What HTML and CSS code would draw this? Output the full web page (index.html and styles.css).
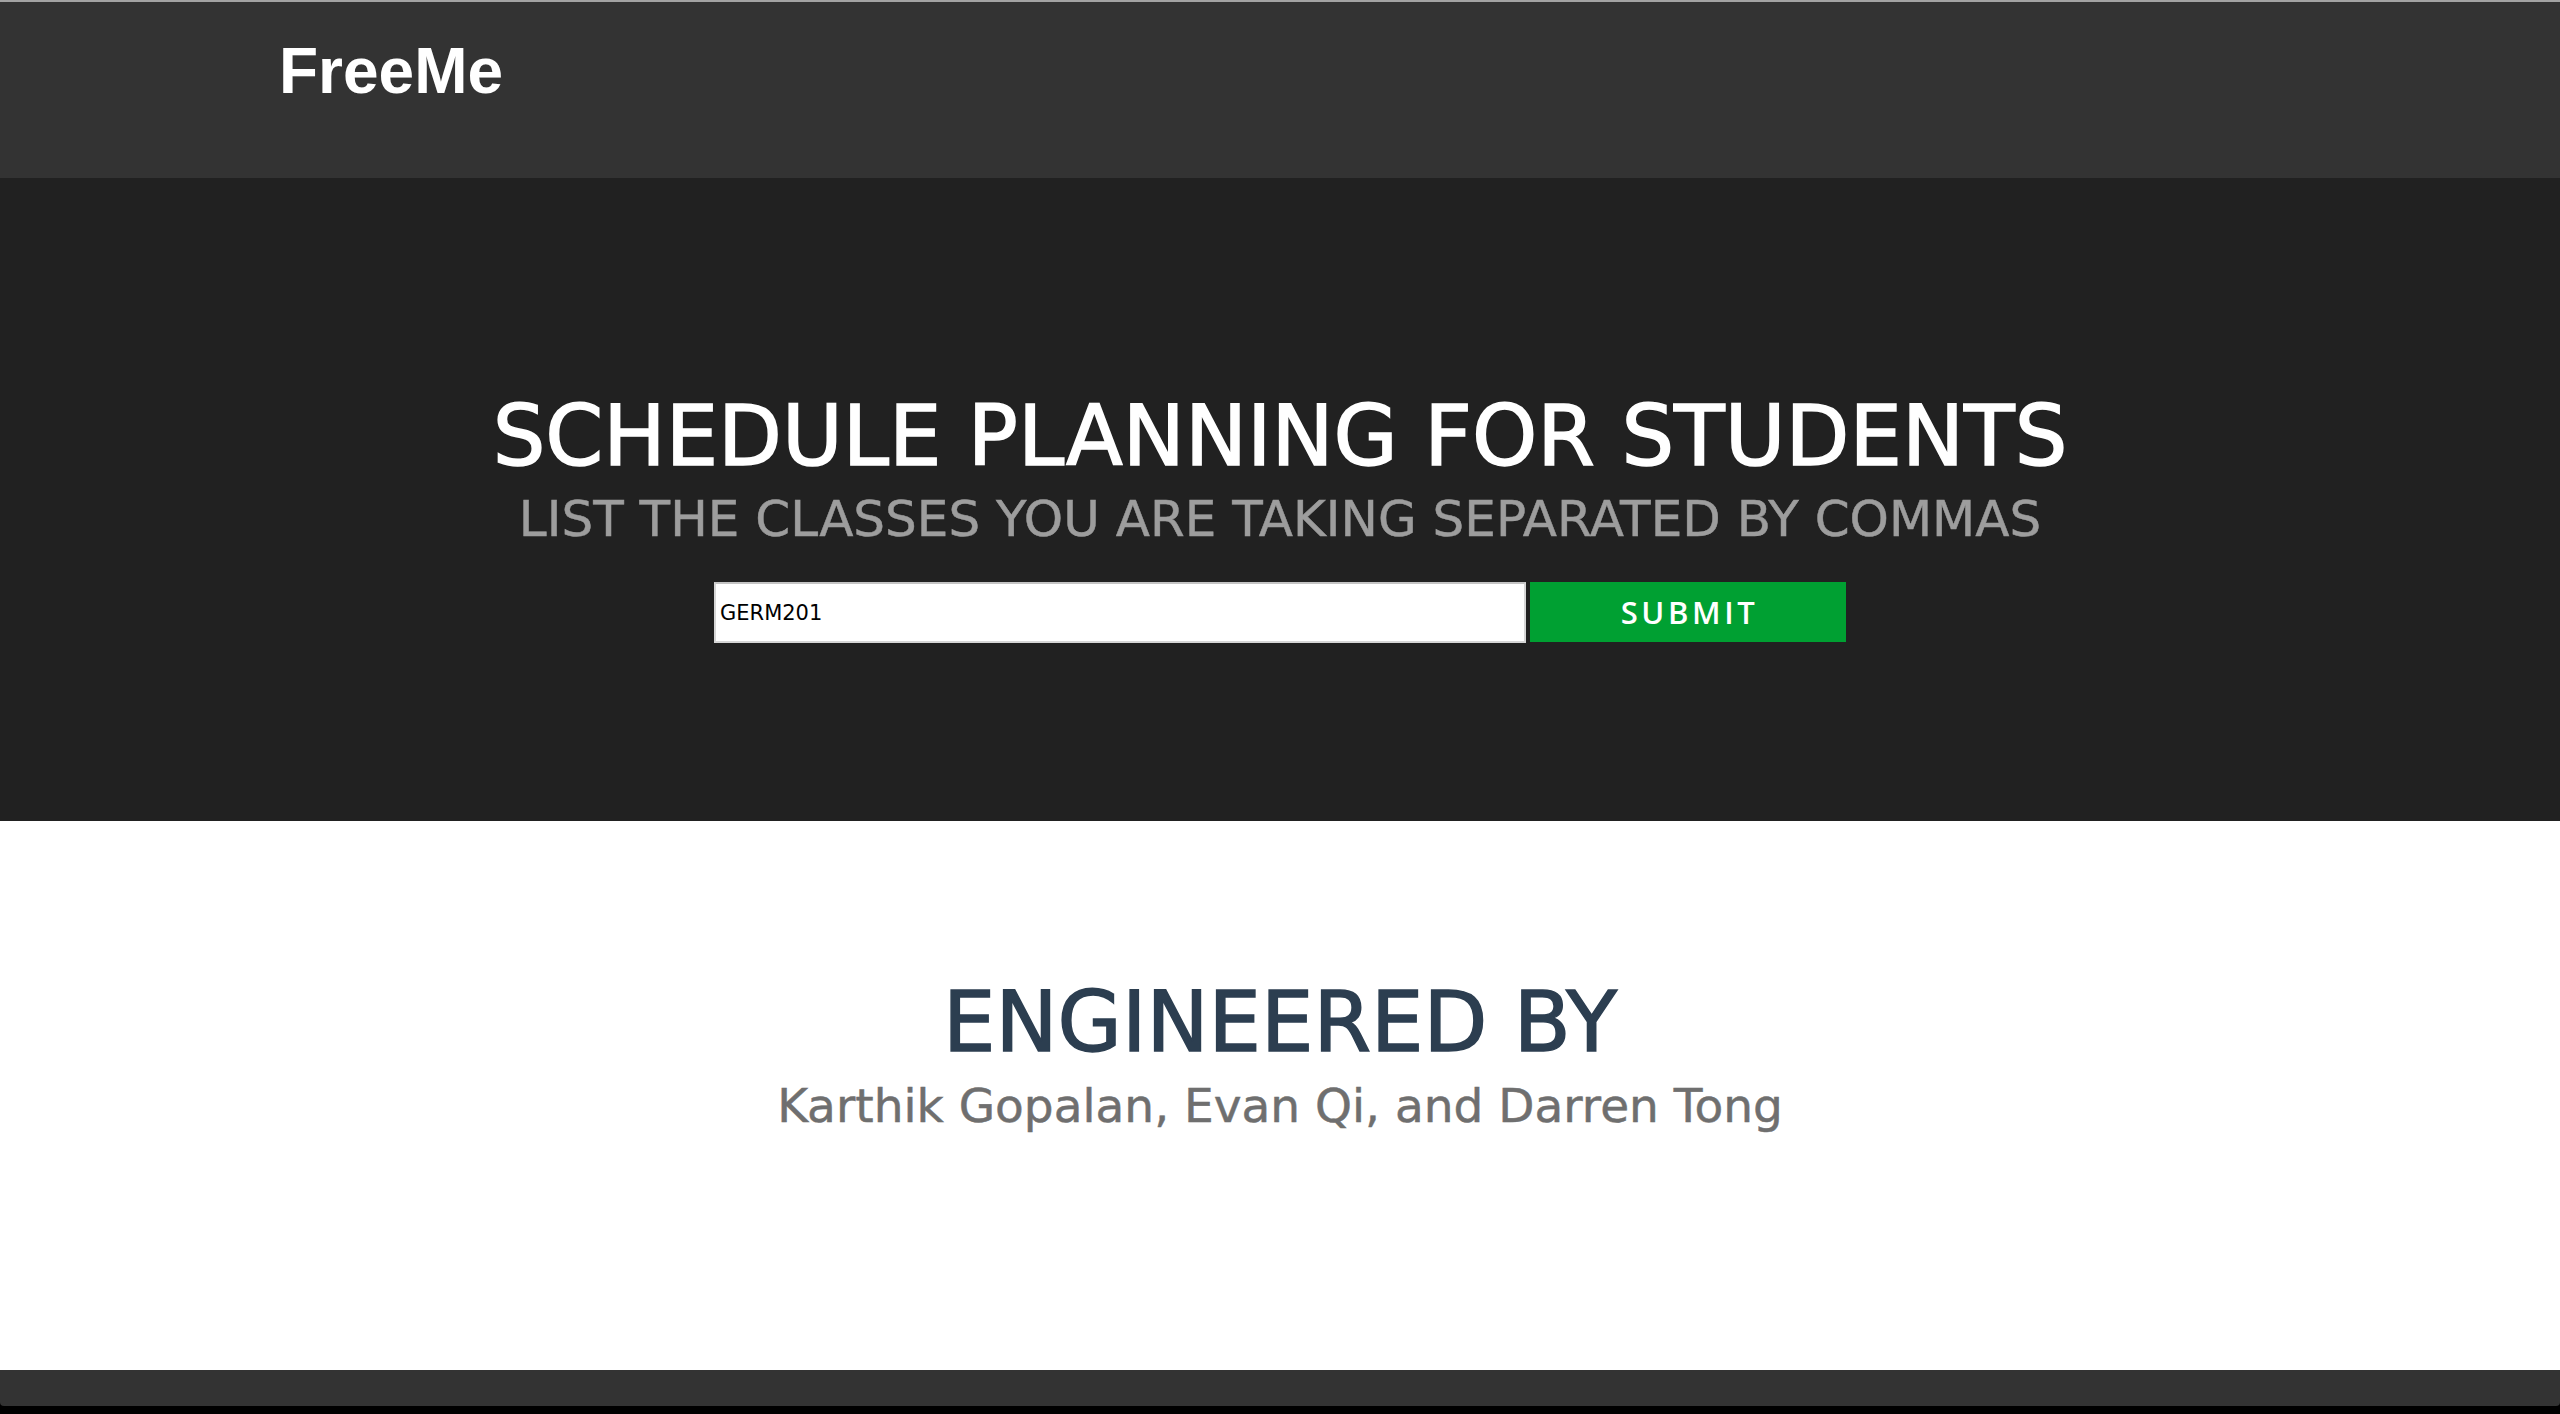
FILE: index.html
```html
<!DOCTYPE html>
<html lang="en">
<head>
<meta charset="utf-8">
<title>FreeMe</title>
<link rel="stylesheet" href="styles.css">
</head>
<body>
<header class="topbar">
  <a class="brand" href="#">FreeMe</a>
</header>
<section class="hero">
  <h1 class="hero-title">SCHEDULE PLANNING FOR STUDENTS</h1>
  <p class="hero-sub">LIST THE CLASSES YOU ARE TAKING SEPARATED BY COMMAS</p>
  <form class="class-form">
    <input class="class-input" type="text" value="GERM201">
    <button class="submit-btn" type="button">SUBMIT</button>
  </form>
</section>
<section class="credits">
  <h2 class="credits-title">ENGINEERED BY</h2>
  <p class="credits-names">Karthik Gopalan, Evan Qi, and Darren Tong</p>
</section>
<footer class="bottombar"></footer>
</body>
</html>
```
FILE: styles.css
```css
html, body {
  margin: 0;
  padding: 0;
}
body {
  background: #000;
  font-family: "DejaVu Sans", sans-serif;
}
.topbar {
  background: #333333;
  border-top: 2px solid #a3a3a3;
  height: 178px;
  box-sizing: border-box;
  padding: 37px 0 0 279px;
}
.brand {
  display: inline-block;
  font-family: "Liberation Sans", Arial, sans-serif;
  font-weight: bold;
  font-size: 64px;
  line-height: 64px;
  color: #fff;
  text-decoration: none;
}
.hero {
  background: #212121;
  display: flex;
  flex-direction: column;
  align-items: center;
  padding: 217px 0 178px;
}
.hero-title {
  margin: 0;
  font-weight: normal;
  font-size: 83px;
  line-height: 83px;
  color: #fff;
  -webkit-text-stroke: 1.5px #fff;
  white-space: nowrap;
}
.hero-sub {
  margin: 16px 0 0;
  font-size: 50px;
  line-height: 50px;
  color: #9d9d9d;
  -webkit-text-stroke: 0.5px #9d9d9d;
  white-space: nowrap;
}
.class-form {
  margin-top: 38px;
  display: flex;
  gap: 4px;
}
.class-input {
  width: 812px;
  height: 61px;
  box-sizing: border-box;
  margin: 0;
  border: 2px solid #d6d6d6;
  border-top-color: #c4c4c4;
  background: #fff;
  padding: 0 0 0 4px;
  font-family: "DejaVu Sans", sans-serif;
  font-size: 21px;
  color: #000;
  outline: none;
}
.submit-btn {
  width: 316px;
  height: 60px;
  margin: 0;
  border: none;
  background: #00a032;
  color: #fff;
  font-family: "Open Sans", sans-serif;
  font-weight: 600;
  font-size: 31px;
  letter-spacing: 3.6px;
  padding: 0 0 0 3px;
  cursor: pointer;
}
.credits {
  background: #fff;
  display: flex;
  flex-direction: column;
  align-items: center;
  padding: 160px 0 241px;
}
.credits-title {
  margin: 0;
  font-weight: normal;
  font-size: 83px;
  line-height: 83px;
  color: #2c3e50;
  -webkit-text-stroke: 1.5px #2c3e50;
}
.credits-names {
  margin: 18px 0 0;
  font-size: 47px;
  line-height: 47px;
  color: #6f6f6f;
  -webkit-text-stroke: 0.5px #6f6f6f;
}
.bottombar {
  background: #333333;
  height: 36px;
  border-radius: 0 0 4px 4px;
}
```
